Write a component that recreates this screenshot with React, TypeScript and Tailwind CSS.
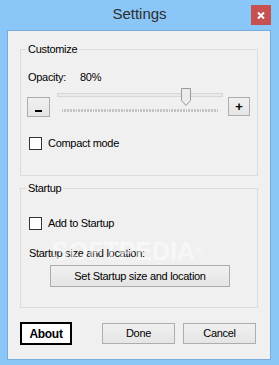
import React from "react";

const font = { fontFamily: '"Liberation Sans", Arial, sans-serif' };

function Checkbox() {
  return <div className="w-[13px] h-[13px] border border-[#333333] bg-white shrink-0" />;
}

function Btn({ children, className = "" }: { children: React.ReactNode; className?: string }) {
  return (
    <div
      className={
        "flex items-center justify-center border border-[#adadad] bg-gradient-to-b from-[#f0f0f0] to-[#e5e5e5] text-black " +
        className
      }
    >
      {children}
    </div>
  );
}

function Slider() {
  const ticks: number[] = [];
  for (let i = 0; i <= 100; i++) ticks.push(Math.round(12 + (i * 155) / 100) + 0.5);
  return (
    <svg width="178" height="29" viewBox="0 0 178 29" className="shrink-0">
      <rect x="7.5" y="5.5" width="165" height="3" fill="#e7eaea" stroke="#d6d6d6" />
      {ticks.map((x, i) => (
        <line key={i} x1={x} x2={x} y1={21} y2={24} stroke="#c4c4c4" strokeWidth="1" />
      ))}
      <path d="M131.5 0.5 H140.5 V12.5 L136 17.5 L131.5 12.5 Z" fill="#ececec" stroke="#9a9a9a" />
    </svg>
  );
}

function Group({ label, className = "", children }: { label: string; className?: string; children: React.ReactNode }) {
  return (
    <div className={"relative border border-[#dcdcdc] " + className}>
      <span className="absolute left-[5px] top-[-8px] bg-[#f0f0f0] px-[2px] leading-[15px] text-black">{label}</span>
      {children}
    </div>
  );
}

export default function App() {
  return (
    <div className="w-[279px] h-[365px] bg-[#8ac6f8] flex flex-col text-[11px] tracking-[-0.3px]" style={font}>
      <div className="relative h-[30px] flex items-center justify-center">
        <span className="text-[15px] tracking-normal text-[#2d2d2d] mt-[-1px]">Settings</span>
        <div className="absolute right-[8px] top-[5px] w-[20px] h-[20px] bg-[#c75050] flex items-center justify-center">
          <svg width="8" height="7" viewBox="0 0 8 7">
            <path d="M1 0.5 L7 6.5 M7 0.5 L1 6.5" stroke="white" strokeWidth="2" />
          </svg>
        </div>
      </div>
      <div className="ml-[7px] mr-[8px] h-[330px] border border-[#76addd] bg-[#f0f0f0] pl-[12px] flex flex-col relative overflow-hidden">
        <Group label="Customize" className="mt-[18px] w-[238px] h-[127px]">
          <div className="flex pl-[7px] pt-[20px] leading-[15px]">
            <span className="w-[52px]">Opacity:</span>
            <span>80%</span>
          </div>
          <div className="flex items-start pl-[6px] mt-[3px]">
            <Btn className="w-[23px] h-[20px] mt-[9px] leading-none font-bold">
              <span className="block w-[7px] h-[2px] bg-black mt-[8px]" />
            </Btn>
            <Slider />
            <Btn className="w-[22px] h-[19px] mt-[9px] font-bold text-[13px]">+</Btn>
          </div>
          <div className="flex items-center pl-[8px] mt-[20px] h-[13px]">
            <Checkbox />
            <span className="ml-[6px] leading-[15px]">Compact mode</span>
          </div>
        </Group>
        <Group label="Startup" className="mt-[12px] w-[238px] h-[120px]">
          <div className="flex items-center pl-[8px] mt-[28px] h-[13px]">
            <Checkbox />
            <span className="ml-[6px] leading-[15px]">Add to Startup</span>
          </div>
          <div className="pl-[8px] mt-[16px] leading-[15px]">Startup size and location:</div>
          <div className="pl-[29px] mt-[4px]">
            <Btn className="w-[180px] h-[22px]">Set Startup size and location</Btn>
          </div>
        </Group>
        <div className="flex items-start mt-[14px]">
          <div className="w-[52px] h-[23px] border-2 border-black bg-white flex items-center justify-center font-bold text-[12px]">
            About
          </div>
          <Btn className="w-[73px] h-[21px] ml-[30px] mt-[1px]">Done</Btn>
          <Btn className="w-[73px] h-[21px] ml-[8px] mt-[1px]">Cancel</Btn>
        </div>
        <div className="absolute left-[44px] top-[205px] text-[25px] font-bold text-white/50 tracking-[0px] pointer-events-none leading-[30px]">
          SOFTPEDIA<span className="text-[9px] align-top">®</span>
        </div>
      </div>
    </div>
  );
}
